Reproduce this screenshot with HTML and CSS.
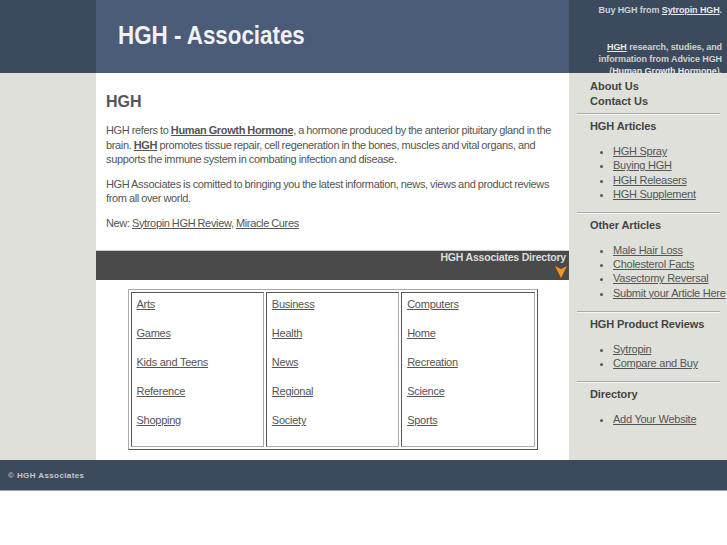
FILE: index.html
```html
<!DOCTYPE html>
<html lang="en">
<head>
    <meta charset="UTF-8">
    <meta name="viewport" content="width=device-width, initial-scale=1.0">
    <link rel="stylesheet" href="styles.css">
    <title>HGH - Associates</title>
</head>
<body>
    <!-- Header -->
    <div class="header">
        <div class="header-side"></div>
        <div class="header-title">
            <h1>HGH - Associates</h1>
        </div>
        <div class="header-blurb">
            <p>Buy HGH from <a href="#">Sytropin HGH</a>.</p>
            <p class="blurb-gap"><a href="#">HGH</a> research, studies, and<br>information from Advice HGH<br>(<a href="#">Human Growth Hormone</a>).</p>
        </div>
    </div>

    <!-- Main -->
    <div class="main">
        <div class="main-side"></div>

        <div class="content">
            <div class="content-text">
                <h2>HGH</h2>
                <p>HGH refers to <a href="#" class="strong">Human Growth Hormone</a>, a hormone produced by the anterior pituitary gland in the brain. <a href="#" class="strong">HGH</a> promotes tissue repair, cell regeneration in the bones, muscles and vital organs, and supports the immune system in combating infection and disease.</p>
                <p>HGH Associates is comitted to bringing you the latest information, news, views and product reviews from all over world.</p>
                <p>New: <a href="#">Sytropin HGH Review</a>, <a href="#">Miracle Cures</a></p>
            </div>

            <!-- Directory bar -->
            <div class="dir-bar">
                <span>HGH Associates Directory</span>
                <svg class="dir-arrow" width="12" height="12" viewBox="0 0 12 12">
                    <polygon points="0,0 6,3 12,0 6,12" fill="#f7941d"/>
                </svg>
            </div>

            <table class="dir-table">
                <tr>
                    <td>
                        <a href="#">Arts</a><br><br>
                        <a href="#">Games</a><br><br>
                        <a href="#">Kids and Teens</a><br><br>
                        <a href="#">Reference</a><br><br>
                        <a href="#">Shopping</a><br><br>
                    </td>
                    <td>
                        <a href="#">Business</a><br><br>
                        <a href="#">Health</a><br><br>
                        <a href="#">News</a><br><br>
                        <a href="#">Regional</a><br><br>
                        <a href="#">Society</a><br><br>
                    </td>
                    <td>
                        <a href="#">Computers</a><br><br>
                        <a href="#">Home</a><br><br>
                        <a href="#">Recreation</a><br><br>
                        <a href="#">Science</a><br><br>
                        <a href="#">Sports</a><br><br>
                    </td>
                </tr>
            </table>
        </div>

        <!-- Sidebar -->
        <div class="side">
            <ul class="side-nav">
                <li><a href="#">About Us</a></li>
                <li><a href="#">Contact Us</a></li>
            </ul>
            <hr>
            <h3>HGH Articles</h3>
            <ul class="side-links">
                <li><a href="#">HGH Spray</a></li>
                <li><a href="#">Buying HGH</a></li>
                <li><a href="#">HGH Releasers</a></li>
                <li><a href="#">HGH Supplement</a></li>
            </ul>
            <hr>
            <h3>Other Articles</h3>
            <ul class="side-links">
                <li><a href="#">Male Hair Loss</a></li>
                <li><a href="#">Cholesterol Facts</a></li>
                <li><a href="#">Vasectomy Reversal</a></li>
                <li><a href="#">Submit your Article Here</a></li>
            </ul>
            <hr>
            <h3>HGH Product Reviews</h3>
            <ul class="side-links">
                <li><a href="#">Sytropin</a></li>
                <li><a href="#">Compare and Buy</a></li>
            </ul>
            <hr>
            <h3>Directory</h3>
            <ul class="side-links">
                <li><a href="#">Add Your Website</a></li>
            </ul>
        </div>
    </div>

    <!-- Footer -->
    <div class="footer">&copy; HGH Associates</div>
</body>
</html>
```

FILE: styles.css
```css
/* Page */
body {
    margin: 0;
    font-family: 'Liberation Sans', Arial, sans-serif;
    background-color: #fff;
    color: #555;
}

a {
    color: #555;
}

/* Header */
.header {
    display: grid;
    grid-template-columns: 96px 473px 158px;
    height: 72px;
    border-bottom: 1px solid #8795a8;
}

.header-side {
    background-color: #3c4a5d;
}

.header-title {
    background-color: #4a5c77;
    padding: 0 0 6px 22px;
    display: flex;
    align-items: center;
}

.header-title h1 {
    margin: 0;
    font-size: 26px;
    color: #f2f2f2;
    transform: scaleX(0.86);
    transform-origin: left center;
}

.header-blurb {
    background-color: #3c4a5d;
    padding: 4px 5px 0 0;
    text-align: right;
    font-size: 9px;
    font-weight: bold;
    line-height: 12px;
    letter-spacing: -0.1px;
    color: #d0d0d0;
}

.header-blurb p {
    margin: 0;
}

.header-blurb a {
    color: #e8e8e8;
}

.blurb-gap {
    padding-top: 25px;
}

/* Main area */
.main {
    display: grid;
    grid-template-columns: 96px 473px 158px;
}

.main-side,
.side {
    background-color: #e0e0da;
}

.content {
    background-color: #fff;
    padding-bottom: 10px;
}

.content-text {
    padding: 0 10px;
}

.content-text h2 {
    font-size: 16px;
    line-height: 19px;
    margin: 19px 0 12px;
}

.content-text p {
    font-size: 11px;
    line-height: 14.5px;
    letter-spacing: -0.35px;
    word-spacing: -0.4px;
    margin: 0 0 10px;
}

.content-text .strong {
    font-weight: bold;
}

/* Directory bar */
.dir-bar {
    margin-top: 20px;
    border-top: 1px solid #ccc;
    background-color: #4a4a4a;
    height: 29px;
    padding-right: 3px;
    display: flex;
    flex-direction: column;
    align-items: flex-end;
    font-size: 10.5px;
    font-weight: bold;
    line-height: 13px;
    letter-spacing: -0.2px;
    color: #ddd;
}

.dir-arrow {
    margin-top: 2px;
    margin-right: -1px;
}

/* Directory table */
.dir-table {
    margin: 9px auto 0;
    width: 410px;
    border: 1px outset #aaa;
    border-spacing: 2px;
}

.dir-table td {
    width: 33%;
    vertical-align: top;
    border: 1px inset #aaa;
    padding: 4px 5px;
    font-size: 11px;
    line-height: 14.5px;
    letter-spacing: -0.25px;
}

/* Sidebar */
.side {
    padding: 6px 7px 0 8px;
    font-size: 11px;
}

.side ul {
    margin: 0;
    padding: 0;
}

.side-nav {
    list-style: none;
    padding-left: 13px !important;
    margin-bottom: 4px !important;
}

.side-nav li {
    line-height: 15px;
}

.side-nav a {
    text-decoration: none;
    font-weight: bold;
    color: #444;
}

.side hr {
    margin: 0;
    border: none;
    border-top: 1px solid #aaa;
    border-bottom: 1px solid #f4f4f0;
}

.side h3 {
    margin: 4px 0 10px 13px;
    font-size: 11px;
    line-height: 15px;
    letter-spacing: -0.1px;
    color: #444;
}

.side-links {
    padding-left: 36px !important;
    margin-bottom: 10.7px !important;
}

.side-links li {
    line-height: 14.3px;
    white-space: nowrap;
    letter-spacing: -0.25px;
}

/* Footer */
.footer {
    background-color: #3c4a5d;
    height: 30px;
    border-bottom: 1px solid #9aa6b4;
    padding-left: 8px;
    display: flex;
    align-items: center;
    font-size: 8px;
    font-weight: bold;
    letter-spacing: 0.4px;
    color: #c8c8c8;
}
```
